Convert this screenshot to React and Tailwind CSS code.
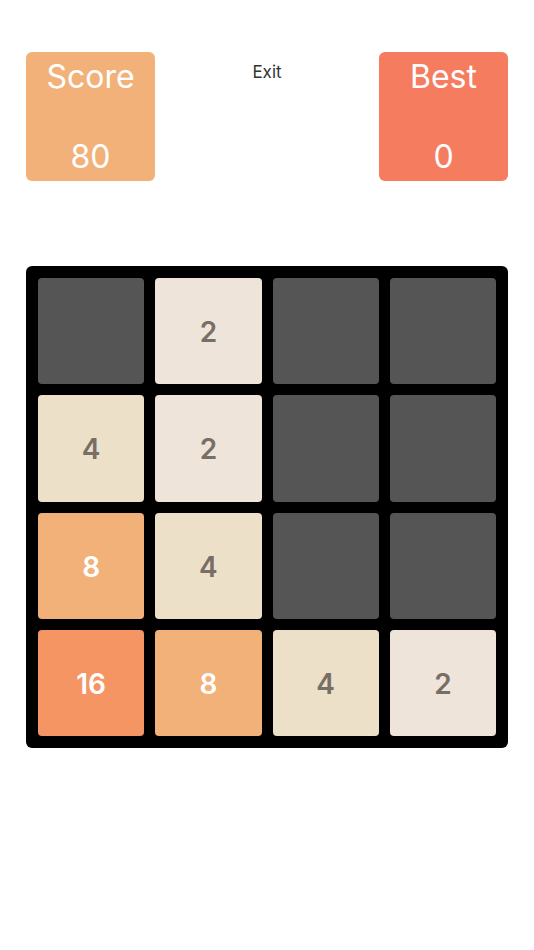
const board = [
  [0, 2, 0, 0],
  [4, 2, 0, 0],
  [8, 4, 0, 0],
  [16, 8, 4, 2],
];

const tileStyle = {
  0: 'bg-[#555555]',
  2: 'bg-[#eee4da] text-[#776e65]',
  4: 'bg-[#ede0c8] text-[#776e65]',
  8: 'bg-[#f2b179] text-white',
  16: 'bg-[#f59563] text-white',
};

const ScoreBox = ({ label, value, color }) => (
  <div
    className={`w-[129px] h-[129px] rounded-[6px] ${color} flex flex-col items-center justify-between pt-[6px] pb-[5px] text-white`}
  >
    <span className="text-[32px] leading-[38px]">{label}</span>
    <span className="text-[32px] leading-[38px]">{value}</span>
  </div>
);

export default function App() {
  return (
    <div
      className="w-[534px] h-[950px] bg-white px-[26px] pt-[52px]"
      style={{ fontFamily: 'Inter, "Noto Sans", sans-serif' }}
    >
      {/* Header */}
      <div className="flex justify-between">
        <ScoreBox label="Score" value="80" color="bg-[#f2b179]" />
        <button className="self-start mt-[9px] text-[17px] leading-[22px] text-[#333]">
          Exit
        </button>
        <ScoreBox label="Best" value="0" color="bg-[#f67c5f]" />
      </div>

      {/* Board */}
      <div className="mt-[85px] w-[482px] h-[482px] bg-black rounded-[6px] p-[12px] grid grid-cols-4 grid-rows-4 gap-[11px]">
        {board.flat().map((v, i) => (
          <div
            key={i}
            className={`rounded-[4px] flex items-center justify-center pt-[2px] text-[28px] font-semibold ${tileStyle[v]}`}
          >
            {v > 0 ? v : ''}
          </div>
        ))}
      </div>
    </div>
  );
}
